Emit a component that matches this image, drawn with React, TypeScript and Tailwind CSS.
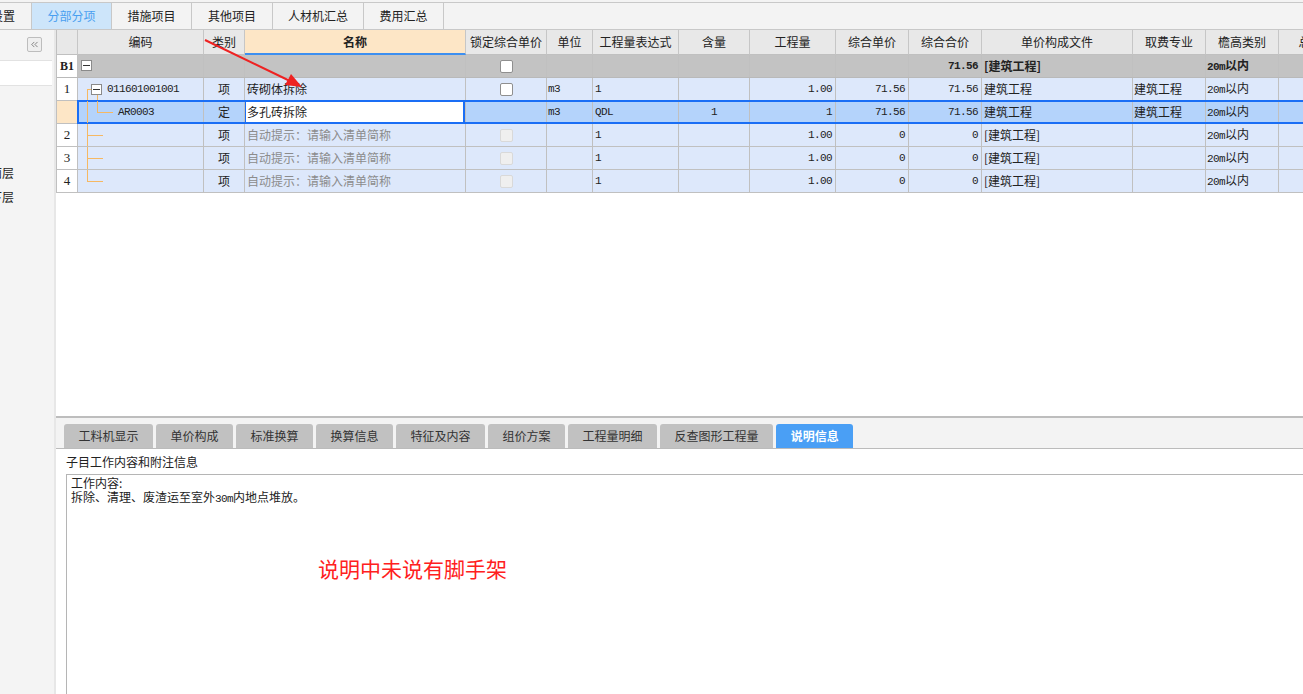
import type { ReactNode } from 'react';
import { ChevronsLeft } from 'lucide-react';

const W = [
  'w-[21px]', 'w-[126px]', 'w-[41px]', 'w-[221px]', 'w-[81px]', 'w-[46px]', 'w-[86px]',
  'w-[71px]', 'w-[86px]', 'w-[73px]', 'w-[73px]', 'w-[151px]', 'w-[73px]', 'w-[73px]', 'w-[64px]',
];

const HEAD = ['', '编码', '类别', '名称', '锁定综合单价', '单位', '工程量表达式', '含量', '工程量', '综合单价', '综合合价', '单价构成文件', '取费专业', '檐高类别', '总价'];

const MONO = "font-['Liberation_Mono',monospace] text-[11px] tracking-[-0.6px]";
const LINE = 'absolute block bg-[#f6b862] z-10';

function Cell({ i, className = '', children }: { i: number; className?: string; children?: ReactNode }) {
  return (
    <div className={`${W[i]} shrink-0 h-full border-r border-[#c0c0c0] flex items-center overflow-hidden whitespace-nowrap ${className}`}>
      {children}
    </div>
  );
}

function MinusBox({ className }: { className: string }) {
  return (
    <span className={`absolute z-20 w-[11px] h-[11px] border border-[#8a8a8a] bg-white flex items-center justify-center ${className}`}>
      <span className="w-[7px] h-px bg-[#333]" />
    </span>
  );
}

function Check({ disabled }: { disabled?: boolean }) {
  return (
    <span
      className={`w-[13px] h-[13px] rounded-[2px] border ${disabled ? 'border-[#d9d9d9] bg-[#efefef]' : 'border-[#8f8f8f] bg-white'}`}
    />
  );
}

function Height({ bold }: { bold?: boolean }) {
  return (
    <span className={bold ? 'font-bold' : ''}>
      <span className={MONO}>20m</span>以内
    </span>
  );
}

function EmptyRow({ num, last }: { num: string; last?: boolean }) {
  return (
    <div className="flex h-[23px] border-b border-[#c0c0c0] bg-[#dde8fb]">
      <Cell i={0} className="bg-white justify-center font-['Liberation_Serif',serif] text-[13px]">{num}</Cell>
      <Cell i={1} className="relative">
        <span className={`${LINE} left-[9px] top-0 w-[1px] ${last ? 'h-[11px]' : 'h-[23px]'}`} />
        <span className={`${LINE} left-[9px] top-[11px] w-[16px] h-[1px]`} />
      </Cell>
      <Cell i={2} className="justify-center">项</Cell>
      <Cell i={3} className="pl-[2px] text-[#8c8c8c]">自动提示：请输入清单简称</Cell>
      <Cell i={4} className="justify-center"><Check disabled /></Cell>
      <Cell i={5} />
      <Cell i={6} className={`pl-[2px] ${MONO}`}>1</Cell>
      <Cell i={7} />
      <Cell i={8} className={`justify-end pr-[3px] ${MONO}`}>1.00</Cell>
      <Cell i={9} className={`justify-end pr-[3px] ${MONO}`}>0</Cell>
      <Cell i={10} className={`justify-end pr-[3px] ${MONO}`}>0</Cell>
      <Cell i={11} className="pl-[2px]">[建筑工程]</Cell>
      <Cell i={12} />
      <Cell i={13} className="pl-px"><Height /></Cell>
      <Cell i={14} />
    </div>
  );
}

const BOTTOM_TABS = ['工料机显示', '单价构成', '标准换算', '换算信息', '特征及内容', '组价方案', '工程量明细', '反查图形工程量', '说明信息'];

export default function App() {
  return (
    <div className="relative w-[1303px] h-[694px] overflow-hidden bg-white text-[12px] text-[#222] font-['Noto_Sans_CJK_SC','Noto_Sans',sans-serif] flex flex-col">
      {/* top tabs */}
      <div className="h-[30px] shrink-0 bg-[#f3f3f3] pt-[2px]">
        <div className="flex h-[28px] border-y border-[#c8c8c8]">
          <div className="w-[32px] border-r border-[#c8c8c8] flex justify-end pr-[16px] items-center overflow-hidden whitespace-nowrap">预算设置</div>
          <div className="w-[80px] border-r border-[#c8c8c8] bg-[#cde5fa] text-[#4a9ff0] flex items-center justify-center">分部分项</div>
          <div className="w-[80px] border-r border-[#c8c8c8] flex items-center justify-center">措施项目</div>
          <div className="w-[81px] border-r border-[#c8c8c8] flex items-center justify-center">其他项目</div>
          <div className="w-[91px] border-r border-[#c8c8c8] flex items-center justify-center">人材机汇总</div>
          <div className="w-[80px] border-r border-[#c8c8c8] flex items-center justify-center">费用汇总</div>
        </div>
      </div>

      <div className="flex flex-1 min-h-0">
        {/* sidebar */}
        <div className="w-[56px] shrink-0 bg-[#f4f4f4] border-r-2 border-[#e7e7e7] flex flex-col">
          <div className="ml-[27px] mt-[7px] w-[15px] h-[15px] border border-[#bdbdbd] rounded-[2px] bg-[#efefef] flex items-center justify-center">
            <ChevronsLeft size={11} strokeWidth={1.5} color="#555" />
          </div>
          <div className="mt-[8px] h-[26px] w-[52px] bg-white border-y border-[#e2e2e2]" />
          <div className="mt-[75px] w-[14px] overflow-hidden flex justify-end whitespace-nowrap leading-[24px]">屋面层</div>
          <div className="w-[14px] overflow-hidden flex justify-end whitespace-nowrap leading-[24px]">地下层</div>
        </div>

        <div className="flex-1 min-w-0 flex flex-col">
          {/* grid */}
          <div className="h-[386px] shrink-0 overflow-hidden">
            <div className="flex h-[25px] bg-[#e8e8e8] border-l border-[#c0c0c0]">
              {HEAD.map((h, i) => (
                <div
                  key={i}
                  className={`${W[i]} shrink-0 h-full border-r border-[#c6c6c6] flex items-center justify-center whitespace-nowrap overflow-hidden ${
                    i === 3 ? 'bg-[#fde6c6] font-bold border-b-2 border-b-[#3d8ff0]' : 'border-b border-b-[#c0c0c0]'
                  }`}
                >
                  {h}
                </div>
              ))}
            </div>

            <div className="border-l border-[#c0c0c0]">
              {/* B1 */}
              <div className="flex h-[23px] border-b border-[#b9b9b9] bg-[#c3c3c3]">
                <Cell i={0} className="bg-white justify-center font-bold font-['Liberation_Serif',serif] text-[12px]">B1</Cell>
                <Cell i={1} className="relative border-[#b9b9b9]"><MinusBox className="left-[3px] top-[5px]" /></Cell>
                <Cell i={2} className="border-[#b9b9b9]" />
                <Cell i={3} className="border-[#b9b9b9]" />
                <Cell i={4} className="justify-center border-[#b9b9b9]"><Check /></Cell>
                <Cell i={5} className="border-[#b9b9b9]" />
                <Cell i={6} className="border-[#b9b9b9]" />
                <Cell i={7} className="border-[#b9b9b9]" />
                <Cell i={8} className="border-[#b9b9b9]" />
                <Cell i={9} className="border-[#b9b9b9]" />
                <Cell i={10} className={`justify-end pr-[3px] font-bold border-[#b9b9b9] ${MONO}`}>71.56</Cell>
                <Cell i={11} className="pl-[2px] font-bold border-[#b9b9b9]">[建筑工程]</Cell>
                <Cell i={12} className="border-[#b9b9b9]" />
                <Cell i={13} className="pl-px border-[#b9b9b9]"><Height bold /></Cell>
                <Cell i={14} className="border-[#b9b9b9]" />
              </div>

              {/* row 1 */}
              <div className="flex h-[23px] border-b border-[#c0c0c0] bg-[#dde8fb]">
                <Cell i={0} className="bg-white justify-center font-['Liberation_Serif',serif] text-[13px]">1</Cell>
                <Cell i={1} className="relative">
                  <span className={`${LINE} left-[9px] top-[11px] w-[4px] h-[1px]`} />
                  <span className={`${LINE} left-[9px] top-[11px] w-[1px] h-[12px]`} />
                  <span className={`${LINE} left-[19px] top-[17px] w-[1px] h-[6px]`} />
                  <MinusBox className="left-[13px] top-[6px]" />
                  <span className={`pl-[29px] ${MONO}`}>011601001001</span>
                </Cell>
                <Cell i={2} className="justify-center">项</Cell>
                <Cell i={3} className="pl-[2px]">砖砌体拆除</Cell>
                <Cell i={4} className="justify-center"><Check /></Cell>
                <Cell i={5} className={`pl-px ${MONO}`}>m3</Cell>
                <Cell i={6} className={`pl-[2px] ${MONO}`}>1</Cell>
                <Cell i={7} />
                <Cell i={8} className={`justify-end pr-[3px] ${MONO}`}>1.00</Cell>
                <Cell i={9} className={`justify-end pr-[3px] ${MONO}`}>71.56</Cell>
                <Cell i={10} className={`justify-end pr-[3px] ${MONO}`}>71.56</Cell>
                <Cell i={11} className="pl-[2px]">建筑工程</Cell>
                <Cell i={12} className="pl-px">建筑工程</Cell>
                <Cell i={13} className="pl-px"><Height /></Cell>
                <Cell i={14} />
              </div>

              {/* selected row */}
              <div className="relative flex h-[23px] border-b border-[#c0c0c0] bg-[#b4d3fb]">
                <Cell i={0} className="bg-[#fde6c6]" />
                <Cell i={1} className="relative">
                  <span className={`${LINE} left-[9px] top-0 w-[1px] h-[23px]`} />
                  <span className={`${LINE} left-[19px] top-0 w-[1px] h-[11px]`} />
                  <span className={`${LINE} left-[19px] top-[11px] w-[16px] h-[1px]`} />
                  <span className={`pl-[40px] ${MONO}`}>AR0003</span>
                </Cell>
                <Cell i={2} className="justify-center">定</Cell>
                <Cell i={3} className="relative bg-white pl-[2px]">
                  <span className="absolute -left-px right-0 -top-px -bottom-px border-x-2 border-[#1a6ef5]" />
                  多孔砖拆除
                </Cell>
                <Cell i={4} />
                <Cell i={5} className={`pl-px ${MONO}`}>m3</Cell>
                <Cell i={6} className={`pl-[2px] ${MONO}`}>QDL</Cell>
                <Cell i={7} className={`justify-center ${MONO}`}>1</Cell>
                <Cell i={8} className={`justify-end pr-[3px] ${MONO}`}>1</Cell>
                <Cell i={9} className={`justify-end pr-[3px] ${MONO}`}>71.56</Cell>
                <Cell i={10} className={`justify-end pr-[3px] ${MONO}`}>71.56</Cell>
                <Cell i={11} className="pl-[2px]">建筑工程</Cell>
                <Cell i={12} className="pl-px">建筑工程</Cell>
                <Cell i={13} className="pl-px"><Height /></Cell>
                <Cell i={14} />
                <span className="absolute left-[20px] -right-[4px] -top-px h-[24px] border-2 border-[#1a6ef5] pointer-events-none" />
              </div>

              <EmptyRow num="2" />
              <EmptyRow num="3" />
              <EmptyRow num="4" last />
            </div>
          </div>

          {/* bottom panel */}
          <div className="flex-1 min-h-0 flex flex-col border-t-2 border-[#bdbdbd]">
            <div className="h-[31px] shrink-0 bg-[#f3f3f3] border-b border-[#bbbbbb] pt-[6px] pl-[8px] flex gap-[3px]">
              {BOTTOM_TABS.map((t) => (
                <div
                  key={t}
                  className={`h-[24px] px-[14.5px] rounded-t-[3px] flex items-center whitespace-nowrap ${
                    t === '说明信息' ? 'bg-[#4a9ff5] text-white font-bold' : 'bg-[#c1c1c1] text-[#333]'
                  }`}
                >
                  {t}
                </div>
              ))}
            </div>
            <div className="h-[25px] shrink-0 pl-[10px] flex items-center">子目工作内容和附注信息</div>
            <div className="flex-1 ml-[10px] border-l border-t border-[#b5b5b5] pl-[4px] pt-[1px] leading-[14px]">
              <div>工作内容:</div>
              <div>
                拆除、清理、废渣运至室外<span className={MONO}>30m</span>内地点堆放。
              </div>
            </div>
          </div>
        </div>
      </div>

      <div className="absolute left-[318px] top-[555px] text-[21px] leading-[26px] text-[#ff2020] whitespace-nowrap">
        说明中未说有脚手架
      </div>

      <svg className="absolute left-0 top-0 pointer-events-none" width="1303" height="694" viewBox="0 0 1303 694">
        <line x1="205" y1="40" x2="290" y2="81" stroke="#ee2222" strokeWidth="2" />
        <polygon points="302,87 285,85 291,74" fill="#ee2222" />
      </svg>
    </div>
  );
}
